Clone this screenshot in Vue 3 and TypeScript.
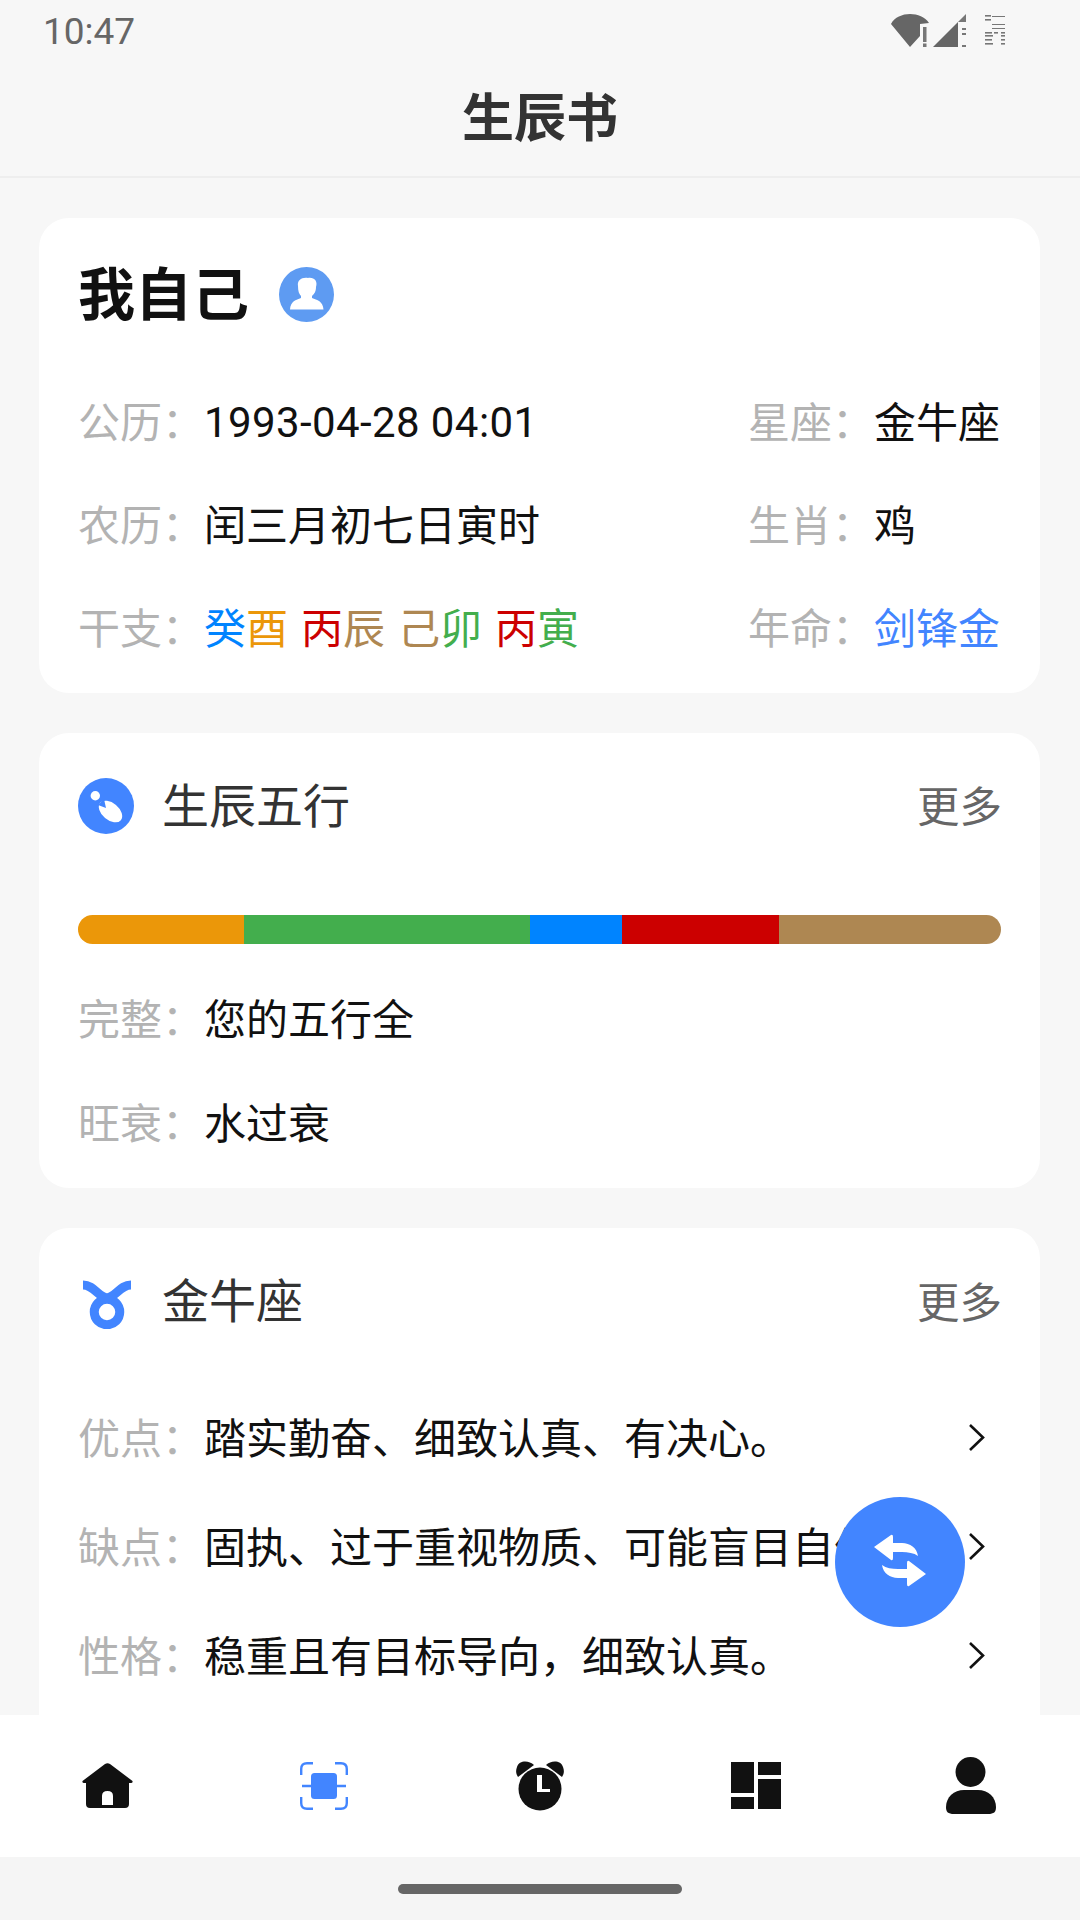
<script setup lang="ts">
interface Cell {
  label: string
  value: string
}

interface Segment {
  color: string
  width: number
}

/** 干支四柱，每柱两个字各有五行颜色 */
const pillars = [
  [{ ch: '癸', cls: 'water' }, { ch: '酉', cls: 'metal' }],
  [{ ch: '丙', cls: 'fire' }, { ch: '辰', cls: 'earth' }],
  [{ ch: '己', cls: 'earth' }, { ch: '卯', cls: 'wood' }],
  [{ ch: '丙', cls: 'fire' }, { ch: '寅', cls: 'wood' }],
]

const segments: Segment[] = [
  { color: '#eb9709', width: 166 },
  { color: '#43ae4d', width: 286 },
  { color: '#0084ff', width: 92 },
  { color: '#cc0000', width: 157 },
  { color: '#ae8752', width: 222 },
]

const wuxingRows: Cell[] = [
  { label: '完整', value: '您的五行全' },
  { label: '旺衰', value: '水过衰' },
]

const starRows: Cell[] = [
  { label: '优点', value: '踏实勤奋、细致认真、有决心。' },
  { label: '缺点', value: '固执、过于重视物质、可能盲目自信。' },
  { label: '性格', value: '稳重且有目标导向，细致认真。' },
]

const swapArrow =
  'M-26 -15 L-9 -27 Q-7 -28 -7 -25 V-19 H2 C10 -19 17 -14 18 -6 C14 -9 8 -10 2 -10 H-7 V-4 Q-7 -1 -9 -2 Z'
</script>

<template>
  <div class="page">
    <div class="status-bar">
      <span class="time">10:47</span>
      <div class="status-icons">
        <svg class="status-svg" width="78" height="36" viewBox="0 0 78 36">
          <path d="M3 12 C10 -1 33 -1 41 11 L32 12 V24 L22 35 Z" fill="#666" />
          <rect x="35" y="15" width="3.500" height="15" fill="#777" />
          <rect x="35" y="31.500" width="3.500" height="3.500" fill="#777" />
          <path d="M45 35 L70 10 V35 Z" fill="#666" />
          <path d="M70 10 L78 2 V10 Z" fill="#777" />
          <rect x="74" y="16" width="4" height="2" fill="#777" />
          <rect x="74" y="21" width="4" height="2" fill="#777" />
          <rect x="74" y="33" width="4" height="2" fill="#777" />
        </svg>
        <svg class="battery" width="20" height="30" viewBox="0 0 20 30">
          <g fill="#777">
            <rect x="0" y="0" width="6" height="1.600" />
            <rect x="7" y="1" width="13" height="1" />
            <rect x="0" y="4" width="6" height="1.600" />
            <rect x="7" y="9" width="13" height="1" />
            <rect x="7" y="13" width="13" height="1" />
            <rect x="0" y="17" width="7" height="1.600" />
            <rect x="9" y="17" width="4" height="1.600" />
            <rect x="16" y="17" width="4" height="1.600" />
            <rect x="0" y="20" width="8" height="1.600" />
            <rect x="16" y="20" width="4" height="1.600" />
            <rect x="0" y="24" width="7" height="1.600" />
            <rect x="16" y="24" width="4" height="1.600" />
            <rect x="0" y="28" width="8" height="1.600" />
            <rect x="16" y="28" width="4" height="1.600" />
          </g>
        </svg>
      </div>
    </div>

    <header class="page-header">生辰书</header>

    <main class="content">
      <!-- 个人信息 -->
      <section class="card card-me">
        <div class="me-head">
          <h2 class="me-name">我自己</h2>
          <svg class="avatar" width="55" height="55" viewBox="0 0 55 55">
            <circle cx="27.500" cy="27.500" r="27.500" fill="#5e9bf2" />
            <path
              d="M19 19 C18 13 23 10 29 11 C35 10 39 14 37 20 C37 25 35 27 33 29 V31 C38 33 44 34 44.500 42.500 H11 C11.500 34 17 33 22 31 V29 C20 27 19 24 19 19 Z"
              fill="#fff"
            />
          </svg>
        </div>
        <div class="me-row">
          <span class="label">公历：</span>
          <span class="value grow date">1993-04-28 04:01</span>
          <span class="label">星座：</span>
          <span class="value side">金牛座</span>
        </div>
        <div class="me-row">
          <span class="label">农历：</span>
          <span class="value grow">闰三月初七日寅时</span>
          <span class="label">生肖：</span>
          <span class="value side">鸡</span>
        </div>
        <div class="me-row">
          <span class="label">干支：</span>
          <span class="value grow pillars">
            <span v-for="(pillar, i) in pillars" :key="i" class="pillar">
              <span v-for="item in pillar" :key="item.ch" :class="item.cls">{{ item.ch }}</span>
            </span>
          </span>
          <span class="label">年命：</span>
          <span class="value side accent">剑锋金</span>
        </div>
      </section>

      <!-- 生辰五行 -->
      <section class="card card-wuxing">
        <div class="sec-head">
          <svg class="sec-icon" width="56" height="56" viewBox="0 0 56 56">
            <circle cx="28" cy="28" r="28" fill="#4285ff" />
            <circle cx="17.300" cy="17.700" r="4.700" fill="#fff" />
            <ellipse cx="32.500" cy="33.500" rx="13.500" ry="8.500" transform="rotate(40 32.500 33.500)" fill="#fff" />
            <path d="M20 27 L28 30 L26 21 Z" fill="#4285ff" />
          </svg>
          <span class="sec-title">生辰五行</span>
          <span class="sec-more">更多</span>
        </div>
        <div class="bar">
          <span
            v-for="seg in segments"
            :key="seg.color"
            class="bar-seg"
            :style="{ width: seg.width + 'px', background: seg.color }"
          />
        </div>
        <div v-for="row in wuxingRows" :key="row.label" class="wx-row">
          <span class="label">{{ row.label }}：</span>
          <span class="value">{{ row.value }}</span>
        </div>
      </section>

      <!-- 星座 -->
      <section class="card card-star">
        <div class="sec-head">
          <svg class="sec-icon" width="56" height="56" viewBox="-1 -4 56 56">
            <circle cx="28" cy="35" r="12.750" fill="none" stroke="#4285ff" stroke-width="9" />
            <path
              d="M4 8 C15 8 19 20 28 21 C37 20 41 8 52 8"
              fill="none"
              stroke="#4285ff"
              stroke-width="9"
            />
          </svg>
          <span class="sec-title">金牛座</span>
          <span class="sec-more">更多</span>
        </div>
        <div v-for="row in starRows" :key="row.label" class="star-row">
          <span class="label">{{ row.label }}：</span>
          <span class="value grow">{{ row.value }}</span>
          <svg class="chevron" width="17" height="29" viewBox="0 0 17 29">
            <path d="M2 2 L15 14.500 L2 27" fill="none" stroke="#111" stroke-width="2.600" />
          </svg>
        </div>
      </section>
    </main>

    <nav class="tabbar">
      <div class="tab">
        <svg width="51" height="45" viewBox="0 0 51 45">
          <path
            fill-rule="evenodd"
            d="M23 1 Q25.500 -0.500 28 1 L50.500 18 Q51 20 49 20 H47 V41 Q47 45 43 45 H8 Q4 45 4 41 V20 H2 Q0 20 0.500 18 Z M20 42 H31 V33 Q31 28 25.500 28 Q20 28 20 33 Z"
            fill="#111"
          />
        </svg>
      </div>
      <div class="tab">
        <svg width="48" height="48" viewBox="0 0 48 48">
          <path
            d="M13 1.200 H7 Q1.200 1.200 1.200 7 V13 M35 1.200 H41 Q46.800 1.200 46.800 7 V13 M13 46.800 H7 Q1.200 46.800 1.200 41 V35 M35 46.800 H41 Q46.800 46.800 46.800 41 V35 M2 24 H11 M37 24 H46"
            fill="none"
            stroke="#4285ff"
            stroke-width="2.400"
          />
          <rect x="11" y="11" width="26" height="26" rx="3.500" fill="#4285ff" />
        </svg>
      </div>
      <div class="tab">
        <svg width="50" height="50" viewBox="0 0 50 50">
          <circle cx="25" cy="28" r="21.500" fill="#111" />
          <path d="M22 14 H27 V28 H35 V31 H22 Z" fill="#fff" />
          <path d="M31 4 C36 -1 46 -1 48 6 C49.500 10 49 13 47 16 Z" fill="#111" />
          <path d="M19 4 C14 -1 4 -1 2 6 C0.500 10 1 13 3 16 Z" fill="#111" />
        </svg>
      </div>
      <div class="tab">
        <svg width="50" height="47" viewBox="0 0 50 47">
          <rect x="0" y="0" width="23" height="31" fill="#111" />
          <rect x="0" y="35" width="23" height="12" fill="#111" />
          <rect x="27" y="0" width="23" height="13" fill="#111" />
          <rect x="27" y="17" width="23" height="30" fill="#111" />
        </svg>
      </div>
      <div class="tab">
        <svg width="50" height="57" viewBox="0 0 50 57">
          <circle cx="24.500" cy="15" r="15" fill="#111" />
          <path
            d="M0 50 C0 40 8 33 18 33 H32 C42 33 50 40 50 50 C50 55 48 57 42 57 H8 C2 57 0 55 0 50 Z"
            fill="#111"
          />
        </svg>
      </div>
    </nav>

    <div class="gesture-area">
      <span class="gesture-pill" />
    </div>

    <button class="fab" type="button">
      <svg width="60" height="60" viewBox="-30 -30 60 60">
        <path :d="swapArrow" fill="#fff" />
        <path :d="swapArrow" transform="rotate(180 0 -1.500)" fill="#fff" />
      </svg>
    </button>
  </div>
</template>

<style scoped>
.page {
  position: relative;
  display: flex;
  flex-direction: column;
  width: 1080px;
  height: 1920px;
  overflow: hidden;
  background: #f7f7f7;
  font-family: Roboto, "Noto Sans CJK SC", sans-serif;
  font-size: 42px;
  color: #111;
}

.status-bar {
  display: flex;
  align-items: center;
  justify-content: space-between;
  height: 60px;
  padding: 0 75px 0 43px;
  flex-shrink: 0;
}

.time {
  padding-top: 2px;
  font-size: 37px;
  color: #666;
}

.status-icons {
  display: flex;
  align-items: center;
  gap: 19px;
}

.status-svg,
.battery {
  display: block;
}

.page-header {
  height: 116px;
  flex-shrink: 0;
  text-align: center;
  font-size: 52px;
  font-weight: 700;
  line-height: 120px;
  color: #333;
  border-bottom: 2px solid #eeeeee;
}

.content {
  flex: 1;
  min-height: 0;
  display: flex;
  flex-direction: column;
  gap: 40px;
  padding: 40px 40px 0 39px;
  overflow: hidden;
}

.card {
  flex-shrink: 0;
  background: #fff;
  border-radius: 30px;
}

.card-me {
  padding: 0 40px 16px 39px;
}

.me-head {
  display: flex;
  align-items: center;
  gap: 30px;
  height: 150px;
}

.me-name {
  margin: 0;
  padding-bottom: 6px;
  font-size: 57px;
  font-weight: 700;
}

.avatar {
  margin-top: 2px;
}

.me-row {
  display: flex;
  align-items: center;
  height: 103px;
}

.label {
  flex-shrink: 0;
  width: 126px;
  color: #b3b3b3;
  white-space: nowrap;
}

.value {
  color: #111;
  white-space: nowrap;
}

.date {
  padding-top: 5px;
  letter-spacing: 0.4px;
}

.grow {
  flex: 1;
  min-width: 0;
}

.side {
  width: 126px;
}

.pillars {
  display: flex;
  gap: 13px;
}

.water {
  color: #0084ff;
}

.metal {
  color: #eb9709;
}

.fire {
  color: #cc0000;
}

.earth {
  color: #ae8752;
}

.wood {
  color: #43ae4d;
}

.accent {
  color: #4285ff;
}

.card-wuxing {
  padding: 0 39px 16px;
}

.sec-head {
  display: flex;
  align-items: center;
  height: 146px;
}

.sec-icon {
  flex-shrink: 0;
  margin-right: 28px;
}

.sec-title {
  flex: 1;
  padding-bottom: 8px;
  font-size: 47px;
  color: #333;
}

.sec-more {
  margin-right: -1px;
  padding-bottom: 5px;
  font-size: 42.500px;
  color: #666;
}

.card-star .sec-more {
  padding-bottom: 3px;
}

.bar {
  display: flex;
  height: 29px;
  margin-top: 36px;
  margin-bottom: 20px;
  border-radius: 15px;
  overflow: hidden;
}

.bar-seg {
  display: block;
  flex-shrink: 0;
}

.wx-row {
  display: flex;
  align-items: center;
  height: 104px;
}

.card-star {
  height: 640px;
  padding: 0 39px;
}

.star-row {
  display: flex;
  align-items: center;
  height: 109px;
}

.sec-head + .star-row {
  margin-top: 7px;
}

.chevron {
  flex-shrink: 0;
  margin: 3px 16px 0 17px;
}

.tabbar {
  display: grid;
  grid-template-columns: repeat(5, 1fr);
  height: 142px;
  flex-shrink: 0;
  background: #fff;
}

.tab {
  display: flex;
  align-items: center;
  justify-content: center;
  padding-bottom: 1px;
}

.tab:first-child,
.tab:last-child {
  padding-right: 2px;
}

.gesture-area {
  display: flex;
  align-items: center;
  justify-content: center;
  height: 63px;
  flex-shrink: 0;
  background: #f5f5f5;
}

.gesture-pill {
  width: 284px;
  height: 10px;
  border-radius: 5px;
  background: #666;
}

.fab {
  position: absolute;
  left: 835px;
  top: 1497px;
  display: flex;
  align-items: center;
  justify-content: center;
  width: 130px;
  height: 130px;
  padding: 0;
  border: none;
  border-radius: 50%;
  background: #4285ff;
}
</style>
